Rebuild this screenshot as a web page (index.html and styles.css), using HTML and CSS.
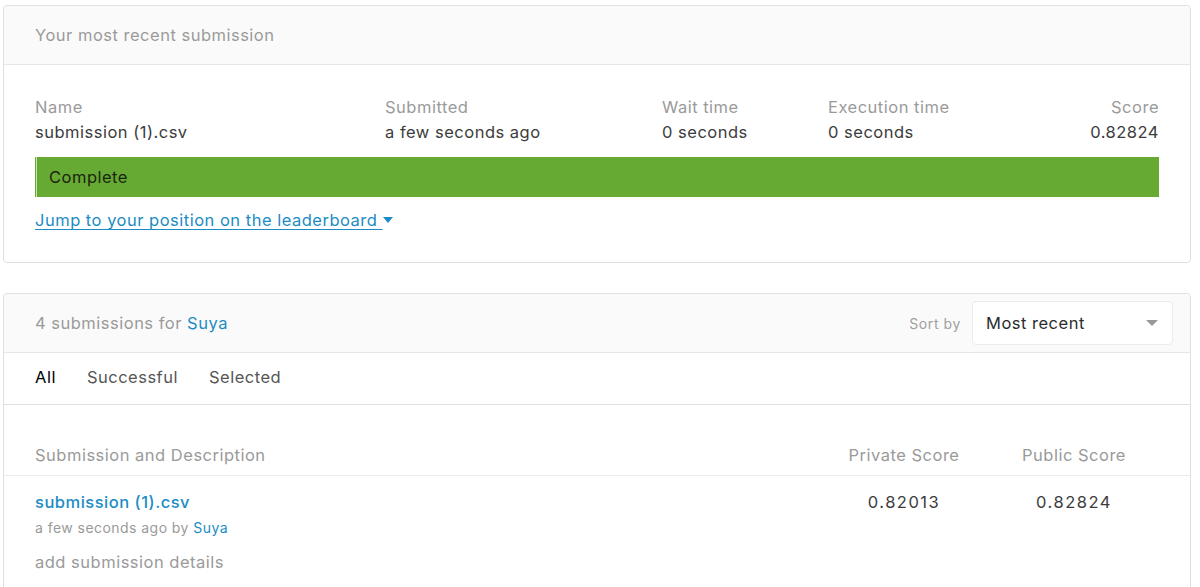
FILE: index.html
```html
<!DOCTYPE html>
<html lang="en">
<head>
<meta charset="utf-8">
<link rel="stylesheet" href="styles.css">
</head>
<body>
<div class="page">
  <section class="card">
    <header class="card-head">
      <span class="head-title">Your most recent submission</span>
    </header>
    <div class="card-body">
      <div class="summary">
        <div class="cell">
          <div class="label">Name</div>
          <div class="value">submission (1).csv</div>
        </div>
        <div class="cell">
          <div class="label">Submitted</div>
          <div class="value">a few seconds ago</div>
        </div>
        <div class="cell">
          <div class="label">Wait time</div>
          <div class="value">0 seconds</div>
        </div>
        <div class="cell">
          <div class="label">Execution time</div>
          <div class="value">0 seconds</div>
        </div>
        <div class="cell cell-right">
          <div class="label">Score</div>
          <div class="value">0.82824</div>
        </div>
      </div>
      <div class="status">Complete</div>
      <a class="jump" href="#">Jump to your position on the leaderboard <span class="caret-blue"></span></a>
    </div>
  </section>

  <section class="card card-second">
    <header class="card-head head-split">
      <span class="head-title">4 submissions for <a class="blue-link" href="#">Suya</a></span>
      <div class="sort">
        <span class="sort-label">Sort by</span>
        <div class="select">
          <span>Most recent</span>
          <span class="caret-gray"></span>
        </div>
      </div>
    </header>
    <nav class="tabs">
      <span class="tab tab-active">All</span>
      <span class="tab">Successful</span>
      <span class="tab">Selected</span>
    </nav>
    <div class="table">
      <div class="thead">
        <div class="th">Submission and Description</div>
        <div class="th th-center">Private Score</div>
        <div class="th th-center">Public Score</div>
      </div>
      <div class="trow">
        <div class="desc">
          <a class="file-link" href="#">submission (1).csv</a>
          <div class="meta">a few seconds ago by <a class="blue-link" href="#">Suya</a></div>
          <div class="details">add submission details</div>
        </div>
        <div class="score">0.82013</div>
        <div class="score">0.82824</div>
      </div>
    </div>
  </section>
</div>
</body>
</html>
```

FILE: styles.css
```css
* { box-sizing: border-box; }

html, body {
  margin: 0;
  padding: 0;
  background: #ffffff;
}

body {
  font-family: "Inter", "Liberation Sans", sans-serif;
  font-size: 16.5px;
  letter-spacing: 0.5px;
  color: #3c3c3c;
  overflow: hidden;
}

.page {
  padding: 5px 9px 0 3px;
  display: flex;
  flex-direction: column;
  gap: 30px;
}

.card {
  border: 1px solid #e0e0e0;
  border-radius: 4px;
  background: #fff;
}

.card-head {
  height: 59px;
  background: #fafafa;
  border-bottom: 1px solid #e6e6e6;
  border-radius: 4px 4px 0 0;
  padding: 0 31px;
  display: flex;
  align-items: center;
}

.head-title {
  color: #9a9a9a;
  line-height: 24px;
}

.card-body {
  padding: 30px 31px 30px;
}

.summary {
  display: grid;
  grid-template-columns: 350px 277px 166px 1fr auto;
  line-height: 25px;
}

.label { color: #9a9a9a; }
.value { color: #3c3c3c; }
.cell-right { text-align: right; }

.status {
  margin-top: 12px;
  height: 40px;
  background: #66aa33;
  color: #1a2410;
  display: flex;
  align-items: center;
  padding-left: 13px;
  border-left: 1px solid #66aa33;
  box-shadow: inset 1px 0 0 #c9e3b4;
}

.jump {
  display: inline-block;
  margin-top: 11px;
  line-height: 24px;
  color: #1b8cc4;
  text-decoration: underline;
  text-underline-offset: 3px;
}

.caret-blue {
  display: inline-block;
  width: 0;
  height: 0;
  border-left: 5px solid transparent;
  border-right: 5px solid transparent;
  border-top: 6px solid #1b8cc4;
  vertical-align: middle;
  margin-bottom: 3px;
}

.head-split {
  justify-content: space-between;
  padding-right: 17px;
}

.blue-link {
  color: #1b8cc4;
  text-decoration: none;
}

.sort {
  display: flex;
  align-items: center;
  gap: 11px;
}

.sort-label {
  color: #a0a0a0;
  font-size: 14px;
  letter-spacing: 0.6px;
}

.select {
  width: 201px;
  height: 44px;
  background: #fff;
  border: 1px solid #ececec;
  border-radius: 4px;
  display: flex;
  align-items: center;
  justify-content: space-between;
  padding: 0 14px 0 13px;
  color: #2c2c2c;
}

.caret-gray {
  width: 0;
  height: 0;
  border-left: 6px solid transparent;
  border-right: 6px solid transparent;
  border-top: 6px solid #999;
}

.tabs {
  height: 52px;
  border-bottom: 1px solid #e0e0e0;
  display: flex;
  align-items: center;
  padding: 0 31px 3px;
  gap: 31px;
}

.tab { color: #555; }
.tab-active { color: #000; }

.table {
  padding: 0 31px 40px;
}

.thead {
  display: grid;
  grid-template-columns: 1fr 170px 170px;
  padding: 38px 31px 8px;
  line-height: 24px;
  border-bottom: 1px solid #ececec;
  margin: 0 -31px;
}

.th { color: #9a9a9a; }

.th-center { text-align: center; }

.trow {
  display: grid;
  grid-template-columns: 1fr 170px 170px;
  padding-top: 14px;
}

.file-link {
  color: #1b8cc4;
  text-decoration: none;
  font-weight: 500;
  line-height: 24px;
  display: block;
}

.meta {
  margin-top: 4px;
  font-size: 14px;
  letter-spacing: 0.45px;
  line-height: 20px;
  color: #9a9a9a;
}

.details {
  margin-top: 12px;
  line-height: 24px;
  color: #9a9a9a;
}

.score {
  text-align: center;
  line-height: 24px;
  letter-spacing: 1.5px;
  color: #3c3c3c;
}
```
